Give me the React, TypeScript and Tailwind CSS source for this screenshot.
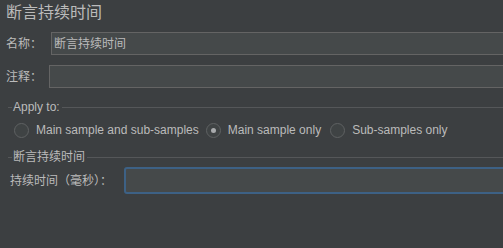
import React from 'react';

const cjk = '"Liberation Sans", "Noto Sans CJK SC", sans-serif';

function Radio({ label, checked, className }: { label: string; checked?: boolean; className?: string }) {
  return (
    <div className={`flex items-center ${className ?? ''}`}>
      <div className="w-[15px] h-[15px] rounded-full border border-[#5f6263] bg-[#3f4344] flex items-center justify-center shrink-0">
        {checked && <div className="w-[5px] h-[5px] rounded-full bg-[#a9abad]" />}
      </div>
      <span className="ml-[7px] whitespace-nowrap">{label}</span>
    </div>
  );
}

function Section({ title, className }: { title: string; className?: string }) {
  return (
    <div className={`flex items-center h-[14px] ${className ?? ''}`}>
      <div className="ml-[8px] w-[4px] h-px bg-[#555759]" />
      <span className="px-[1px] whitespace-nowrap">{title}</span>
      <div className="flex-1 h-px bg-[#555759] ml-[1px]" />
    </div>
  );
}

export default function App() {
  return (
    <div
      className="w-[503px] h-[248px] overflow-hidden bg-[#3c3f41] text-[#bbbbbb] text-[12px] flex flex-col"
      style={{ fontFamily: cjk }}
    >
      <div className="h-[25px] leading-[25px] pl-[6px] text-[16px]">断言持续时间</div>

      <div className="flex items-center h-[23px] mt-[7px]">
        <span className="w-[51px] pl-[6px] shrink-0">名称：</span>
        <div className="flex-1 -mr-[4px] h-[23px] bg-[#45494a] border border-[#646464] pl-[2px] flex items-center">
          断言持续时间
        </div>
      </div>

      <div className="flex items-center h-[23px] mt-[10px]">
        <span className="w-[49px] pl-[6px] shrink-0">注释：</span>
        <div className="flex-1 -mr-[4px] h-[23px] bg-[#45494a] border border-[#646464]" />
      </div>

      <Section title="Apply to:" className="mt-[12px]" />

      <div className="flex items-center h-[16px] mt-[8px] pl-[14px]">
        <Radio label="Main sample and sub-samples" />
        <Radio label="Main sample only" checked className="ml-[7px]" />
        <Radio label="Sub-samples only" className="ml-[9px]" />
      </div>

      <Section title="断言持续时间" className="mt-[12px]" />

      <div className="flex items-center h-[27px] mt-[3px]">
        <span className="w-[124px] pl-[10px] shrink-0">持续时间（毫秒）：</span>
        <div className="flex-1 -mr-[4px] h-[27px] bg-[#45494a] border-2 border-[#3d6185] rounded-[3px]" />
      </div>
    </div>
  );
}
